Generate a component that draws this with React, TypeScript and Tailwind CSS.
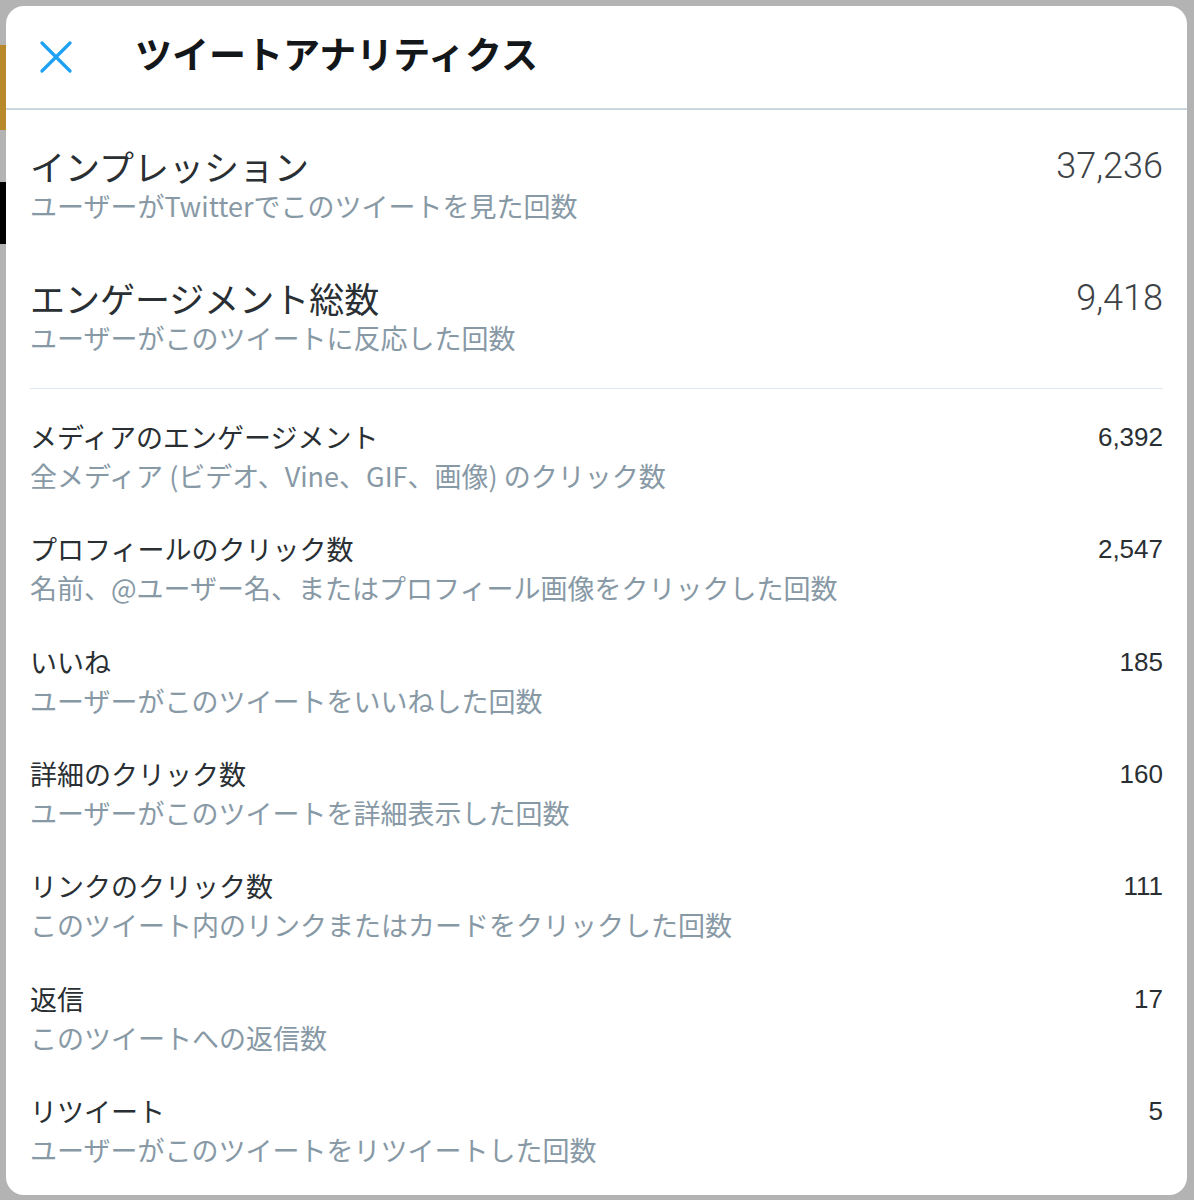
const jp = '"Noto Sans CJK JP", "Noto Sans", sans-serif'

const summary = [
  { title: 'インプレッション', desc: 'ユーザーがTwitterでこのツイートを見た回数', value: '37,236' },
  { title: 'エンゲージメント総数', desc: 'ユーザーがこのツイートに反応した回数', value: '9,418' },
]

const details = [
  { title: 'メディアのエンゲージメント', desc: '全メディア (ビデオ、Vine、GIF、画像) のクリック数', value: '6,392' },
  { title: 'プロフィールのクリック数', desc: '名前、@ユーザー名、またはプロフィール画像をクリックした回数', value: '2,547' },
  { title: 'いいね', desc: 'ユーザーがこのツイートをいいねした回数', value: '185' },
  { title: '詳細のクリック数', desc: 'ユーザーがこのツイートを詳細表示した回数', value: '160' },
  { title: 'リンクのクリック数', desc: 'このツイート内のリンクまたはカードをクリックした回数', value: '111' },
  { title: '返信', desc: 'このツイートへの返信数', value: '17' },
  { title: 'リツイート', desc: 'ユーザーがこのツイートをリツイートした回数', value: '5' },
]

function CloseIcon() {
  return (
    <svg width="32" height="32" viewBox="0 0 32 32" fill="none">
      <path d="M2 2 L30 30 M30 2 L2 30" stroke="#1da1f2" strokeWidth="3.2" strokeLinecap="round" />
    </svg>
  )
}

export default function App() {
  return (
    <div className="relative h-[1200px] w-full overflow-hidden bg-[#b3b3b3] p-[6px]" style={{ fontFamily: jp }}>
      {/* bits of the page behind the overlay */}
      <div className="absolute left-0 top-[45px] h-[85px] w-[6px] bg-[#b8892a]" />
      <div className="absolute left-0 top-[182px] h-[62px] w-[6px] bg-black" />

      <div className="relative flex h-[1189px] w-[1181px] flex-col overflow-hidden rounded-[18px] bg-white">
        {/* Header */}
        <div className="flex h-[104px] shrink-0 items-center border-b-2 border-[#ccd6dd] pl-[34px]">
          <CloseIcon />
          <h1 className="mb-[7px] ml-[63px] text-[37px] font-bold leading-none text-[#14171a]">
            ツイートアナリティクス
          </h1>
        </div>

        <div className="px-[24px]">
          {/* Totals */}
          <div className="pt-[34px]">
            {summary.map((s, i) => (
              <div key={s.title} className={`flex items-start justify-between ${i > 0 ? 'mt-[52px]' : ''}`}>
                <div>
                  <div className="text-[35px] leading-[44px] text-[#292f33]">{s.title}</div>
                  <div className="text-[27px] leading-[36px] text-[#8899a6]">{s.desc}</div>
                </div>
                <div
                  className="text-[36px] font-light leading-[44px] text-[#3d4246]"
                  style={{ fontFamily: 'Roboto, "Liberation Sans", sans-serif' }}
                >
                  {s.value}
                </div>
              </div>
            ))}
          </div>

          <div className="mt-[32px] h-px bg-[#e1e8ed]" />

          {/* Breakdown */}
          <div className="pt-[11px]">
            {details.map((d) => (
              <div key={d.title} className="flex h-[112.33px] items-start justify-between pt-[17px]">
                <div>
                  <div className="text-[27px] leading-[40px] text-[#292f33]">{d.title}</div>
                  <div className="text-[27px] leading-[38px] text-[#8899a6]">{d.desc}</div>
                </div>
                <div
                  className="text-[26px] leading-[40px] text-[#292f33]"
                  style={{ fontFamily: '"Liberation Sans", Arial, sans-serif' }}
                >
                  {d.value}
                </div>
              </div>
            ))}
          </div>
        </div>
      </div>
    </div>
  )
}
